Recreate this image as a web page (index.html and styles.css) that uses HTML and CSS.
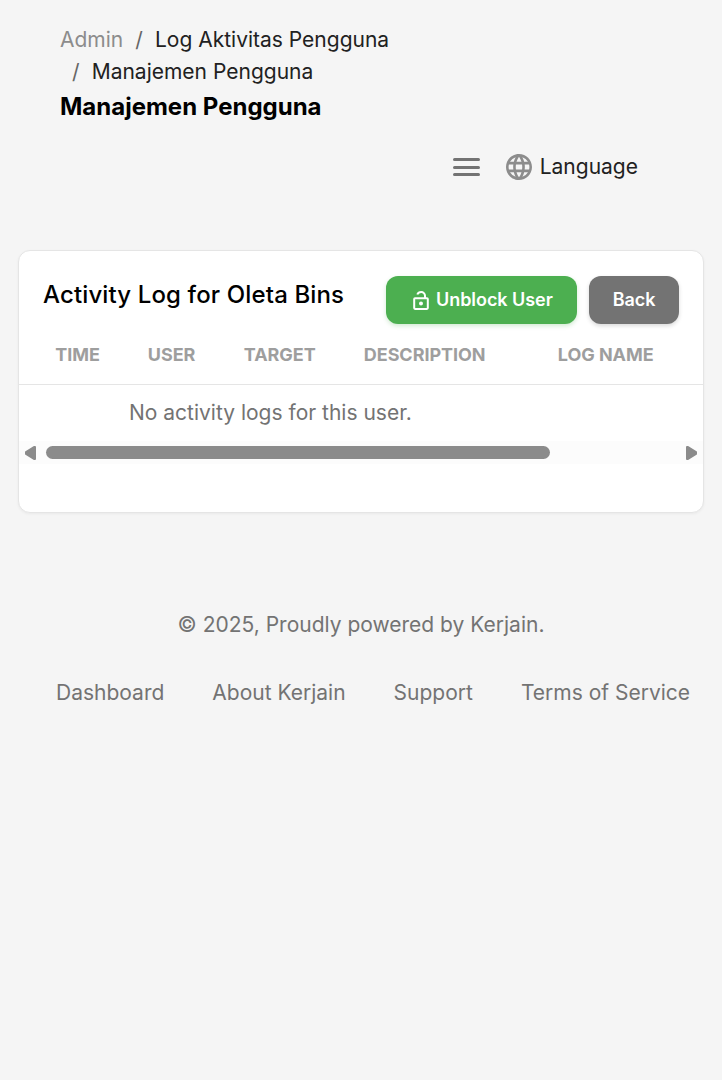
FILE: index.html
```html
<!DOCTYPE html>
<html lang="id">
<head>
<meta charset="utf-8">
<title>Manajemen Pengguna</title>
<link rel="stylesheet" href="styles.css">
</head>
<body>
<header class="header">
  <nav class="crumbs">
    <div class="crumb-row"><a class="muted">Admin</a><span class="sep">/</span><a>Log Aktivitas Pengguna</a></div>
    <div class="crumb-row second"><span class="sep">/</span><a>Manajemen Pengguna</a></div>
  </nav>
  <h1 class="title">Manajemen Pengguna</h1>
  <div class="tools">
    <span class="burger"><i></i><i></i><i></i></span>
    <svg class="globe" viewBox="2 2 20 20"><path d="M11.99 2C6.47 2 2 6.48 2 12s4.47 10 9.99 10C17.52 22 22 17.52 22 12S17.52 2 11.99 2zm6.93 6h-2.95a15.65 15.65 0 0 0-1.38-3.56A8.03 8.03 0 0 1 18.92 8zM12 4.04c.83 1.2 1.48 2.53 1.91 3.96h-3.82c.43-1.43 1.08-2.76 1.91-3.96zM4.26 14C4.1 13.36 4 12.69 4 12s.1-1.36.26-2h3.38c-.08.66-.14 1.32-.14 2s.06 1.34.14 2H4.26zm.82 2h2.95c.32 1.25.78 2.45 1.38 3.56A7.99 7.99 0 0 1 5.08 16zm2.95-8H5.08a7.99 7.99 0 0 1 4.33-3.56A15.65 15.65 0 0 0 8.03 8zM12 19.96c-.83-1.2-1.48-2.53-1.91-3.96h3.82c-.43 1.43-1.08 2.76-1.91 3.96zM14.34 14H9.66c-.09-.66-.16-1.32-.16-2s.07-1.35.16-2h4.68c.09.65.16 1.32.16 2s-.07 1.34-.16 2zm.25 5.56c.6-1.11 1.06-2.31 1.38-3.56h2.95a8.03 8.03 0 0 1-4.33 3.56zM16.36 14c.08-.66.14-1.32.14-2s-.06-1.34-.14-2h3.38c.16.64.26 1.31.26 2s-.1 1.36-.26 2h-3.38z"/></svg>
    <span class="language">Language</span>
  </div>
</header>
<main class="card">
  <div class="card-head">
    <h2 class="card-title">Activity Log for Oleta Bins</h2>
    <button class="btn green"><svg class="lock" viewBox="0 0 16 19"><rect class="lock-line" x="1.2" y="7.3" width="13.6" height="10.6" rx=".8"/><path class="lock-line shackle" d="M12 7V4.8C12 2.7 10.3 1 8.2 1 6.4 1 4.9 2 4.3 3.5"/><circle cx="8" cy="12.6" r="2"/></svg>Unblock User</button>
    <button class="btn gray">Back</button>
  </div>
  <div class="table-head"><span>TIME</span><span>USER</span><span>TARGET</span><span>DESCRIPTION</span><span>LOG NAME</span></div>
  <p class="empty">No activity logs for this user.</p>
  <div class="scrollbar">
    <svg class="arrow" viewBox="0 0 12 16"><path d="M11 2v12h-1L2 9V7l8-5z"/></svg>
    <div class="track"><div class="thumb"></div></div>
    <svg class="arrow" viewBox="0 0 12 16"><path d="M1 2v12h1L10 9V7L2 2z"/></svg>
  </div>
</main>
<footer class="footer">
  <p class="copy">© 2025, Proudly powered by Kerjain.</p>
  <nav class="links"><a>Dashboard</a><a>About Kerjain</a><a>Support</a><a>Terms of Service</a></nav>
</footer>
</body>
</html>
```
FILE: styles.css
```css
* { box-sizing: border-box; }
body { margin: 0; min-height: 1080px; background: #f5f5f5; font-family: Inter, sans-serif; font-size: 21px; line-height: 32px; color: #212121; white-space: nowrap; }
h1, h2, p { margin: 0; }
.header { padding: 24px 84px 0 60px; }
.crumb-row { display: flex; height: 32px; }
.muted { color: #8c8c8c; }
.sep { width: 31.7px; text-align: center; color: #666; }
.title { padding-top: 1px; font-size: 24px; line-height: 36px; font-weight: 700; color: #000; }
.tools { display: flex; justify-content: flex-end; align-items: center; height: 32px; margin-top: 26px; }
.burger { display: flex; flex-direction: column; gap: 4.5px; width: 27px; margin-right: 26px; }
.burger i { height: 3px; border-radius: 2px; background: #737373; }
.globe { width: 26px; height: 26px; margin-right: 8px; fill: #8c8c8c; }
.card { height: 263px; margin: 67px 18px 0; border: 1px solid #e5e5e5; border-radius: 12px; background: #fff; box-shadow: 0 1px 3px #0000000d; }
.card-head { display: flex; padding: 25px 24px 0; }
.card-title { flex: 1; padding-top: 1px; font-size: 24px; line-height: 36px; font-weight: 540; letter-spacing: .13px; color: #000; }
.btn { display: flex; align-items: center; justify-content: center; height: 48px; padding: 0 0 1px; border: 0; border-radius: 12px; color: #fff; font: 600 18px Inter, sans-serif; letter-spacing: -.05px; box-shadow: 0 2px 4px #00000026; }
.green { width: 191px; justify-content: flex-start; padding-left: 27px; background: #4caf50; box-shadow: 0 2px 4px #4caf5040; }
.gray { width: 90px; margin-left: 12px; background: #737373; }
.lock { width: 16px; height: 19px; margin: 1px 7px 0 0; fill: #fff; overflow: visible; }
.lock-line { fill: none; stroke: #fff; stroke-width: 2; }
.table-head { display: grid; grid-template-columns: 92.5px 96px 120px 194px 1fr; height: 61px; padding: 15px 0 0 36.3px; border-bottom: 1px solid #e5e5e5; font-size: 18px; font-weight: 650; letter-spacing: -.05px; color: #9e9e9e; }
.empty { height: 56px; padding: 12px 0 0 110px; color: #737373; }
.scrollbar { display: flex; align-items: center; height: 23px; padding: 0 5px; background: #fcfcfc; }
.arrow { width: 12px; height: 16px; fill: #8b8b8b; stroke: #8b8b8b; stroke-width: 2; stroke-linejoin: round; }
.track { flex: 1; padding: 0 10px; }
.thumb { width: 504px; height: 13px; border-radius: 7px; background: #8b8b8b; }
.footer { margin-top: 96px; color: #737373; }
.copy { text-align: center; }
.links { display: flex; gap: 48px; padding: 36px 0 0 56px; }
```
